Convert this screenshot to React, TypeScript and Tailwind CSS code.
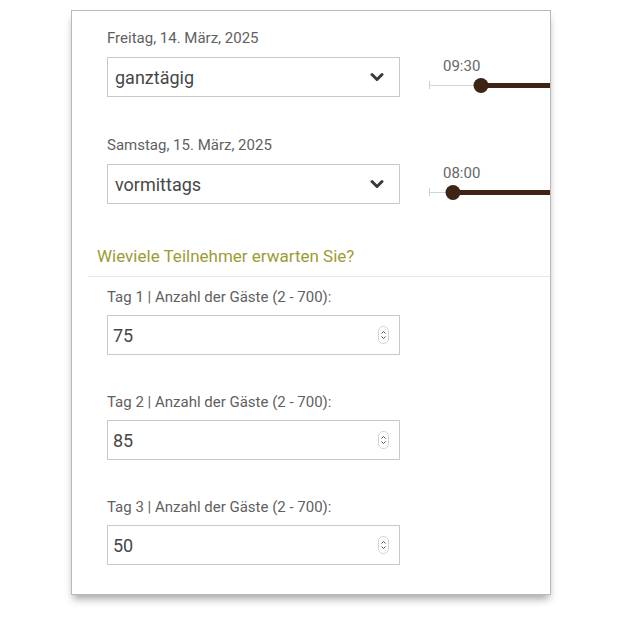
import React from 'react';

type DaySlot = {
  date: string;
  period: string;
  time: string;
  thumb: number;
};

const days: DaySlot[] = [
  { date: 'Freitag, 14. März, 2025', period: 'ganztägig', time: '09:30', thumb: 52 },
  { date: 'Samstag, 15. März, 2025', period: 'vormittags', time: '08:00', thumb: 24 },
];

const guests = [
  { label: 'Tag 1 | Anzahl der Gäste (2 - 700):', value: '75' },
  { label: 'Tag 2 | Anzahl der Gäste (2 - 700):', value: '85' },
  { label: 'Tag 3 | Anzahl der Gäste (2 - 700):', value: '50' },
];

const ChevronDown = () => (
  <svg width="14" height="10" viewBox="0 0 14 10" className="text-[#3a3a3a]">
    <polyline points="2,2.5 7,7.5 12,2.5" fill="none" stroke="currentColor" strokeWidth="3" strokeLinecap="round" strokeLinejoin="round" />
  </svg>
);

const Spinner = () => (
  <span className="flex h-[18px] w-[11px] flex-col items-center justify-center gap-[2px] rounded-[5px] border border-[#d6d6d6]">
    <svg width="5" height="3" viewBox="0 0 5 3">
      <polyline points="0.5,2.5 2.5,0.5 4.5,2.5" fill="none" stroke="#555" strokeWidth="1" />
    </svg>
    <svg width="5" height="3" viewBox="0 0 5 3">
      <polyline points="0.5,0.5 2.5,2.5 4.5,0.5" fill="none" stroke="#555" strokeWidth="1" />
    </svg>
  </span>
);

const TimeSlider = ({ time, thumb }: { time: string; thumb: number }) => (
  <div className="ml-[29px] w-[220px] shrink-0 pt-[30px]">
    <div className="pl-[14px] text-[15px] leading-4 text-[#666]">{time}</div>
    <div className="relative h-[22px]">
      {/* start tick + empty part of the track */}
      <div className="absolute left-0 top-[7px] h-[8px] w-px bg-[#cfcfcf]" />
      <div className="absolute left-0 top-[10.5px] h-px bg-[#d4d4d4]" style={{ width: thumb }} />
      <div className="absolute right-0 top-[8.5px] h-[5px] bg-[#3d2415]" style={{ left: thumb }} />
      <div
        className="absolute top-[4px] h-[15px] w-[15px] -translate-x-1/2 rounded-full bg-[#3d2415]"
        style={{ left: thumb }}
      />
    </div>
  </div>
);

export default function App() {
  return (
    <div className="min-h-[621px] bg-white pt-[10px] font-['Roboto',sans-serif]">
      <div className="ml-[71px] h-[585px] w-[480px] overflow-hidden border border-[#b9b9b9] bg-white shadow-[0_6px_8px_-2px_rgba(0,0,0,0.35)]">
        <div className="pt-[17px]">
          {days.map((d, i) => (
            <div key={d.date} className={`flex pl-[35px] ${i > 0 ? 'mt-[38px]' : ''}`}>
              <div className="w-[293px] shrink-0">
                <div className="text-[15px] leading-5 text-[#5f5f5f]">{d.date}</div>
                <div className="mt-[9px] flex h-[40px] items-center justify-between border border-[#c9c9c9] pl-[7px] pr-[15px]">
                  <span className="text-[18px] text-[#474747]">{d.period}</span>
                  <ChevronDown />
                </div>
              </div>
              <TimeSlider time={d.time} thumb={d.thumb} />
            </div>
          ))}
        </div>

        <h3 className="mt-[40px] pl-[25px] text-[17px] leading-6 text-[#9d9b35]">
          Wieviele Teilnehmer erwarten Sie?
        </h3>
        <div className="ml-[16px] mt-[8px] h-px bg-[#e8e8e8]" />

        <div className="mt-[10px] flex flex-col gap-[37px] pl-[35px]">
          {guests.map((g) => (
            <div key={g.label} className="w-[293px]">
              <div className="text-[15px] leading-5 text-[#5f5f5f]">{g.label}</div>
              <div className="mt-[8px] flex h-[40px] items-center justify-between border border-[#c9c9c9] pl-[5px] pr-[10px]">
                <span className="text-[18px] text-[#474747]">{g.value}</span>
                <Spinner />
              </div>
            </div>
          ))}
        </div>
      </div>
    </div>
  );
}
